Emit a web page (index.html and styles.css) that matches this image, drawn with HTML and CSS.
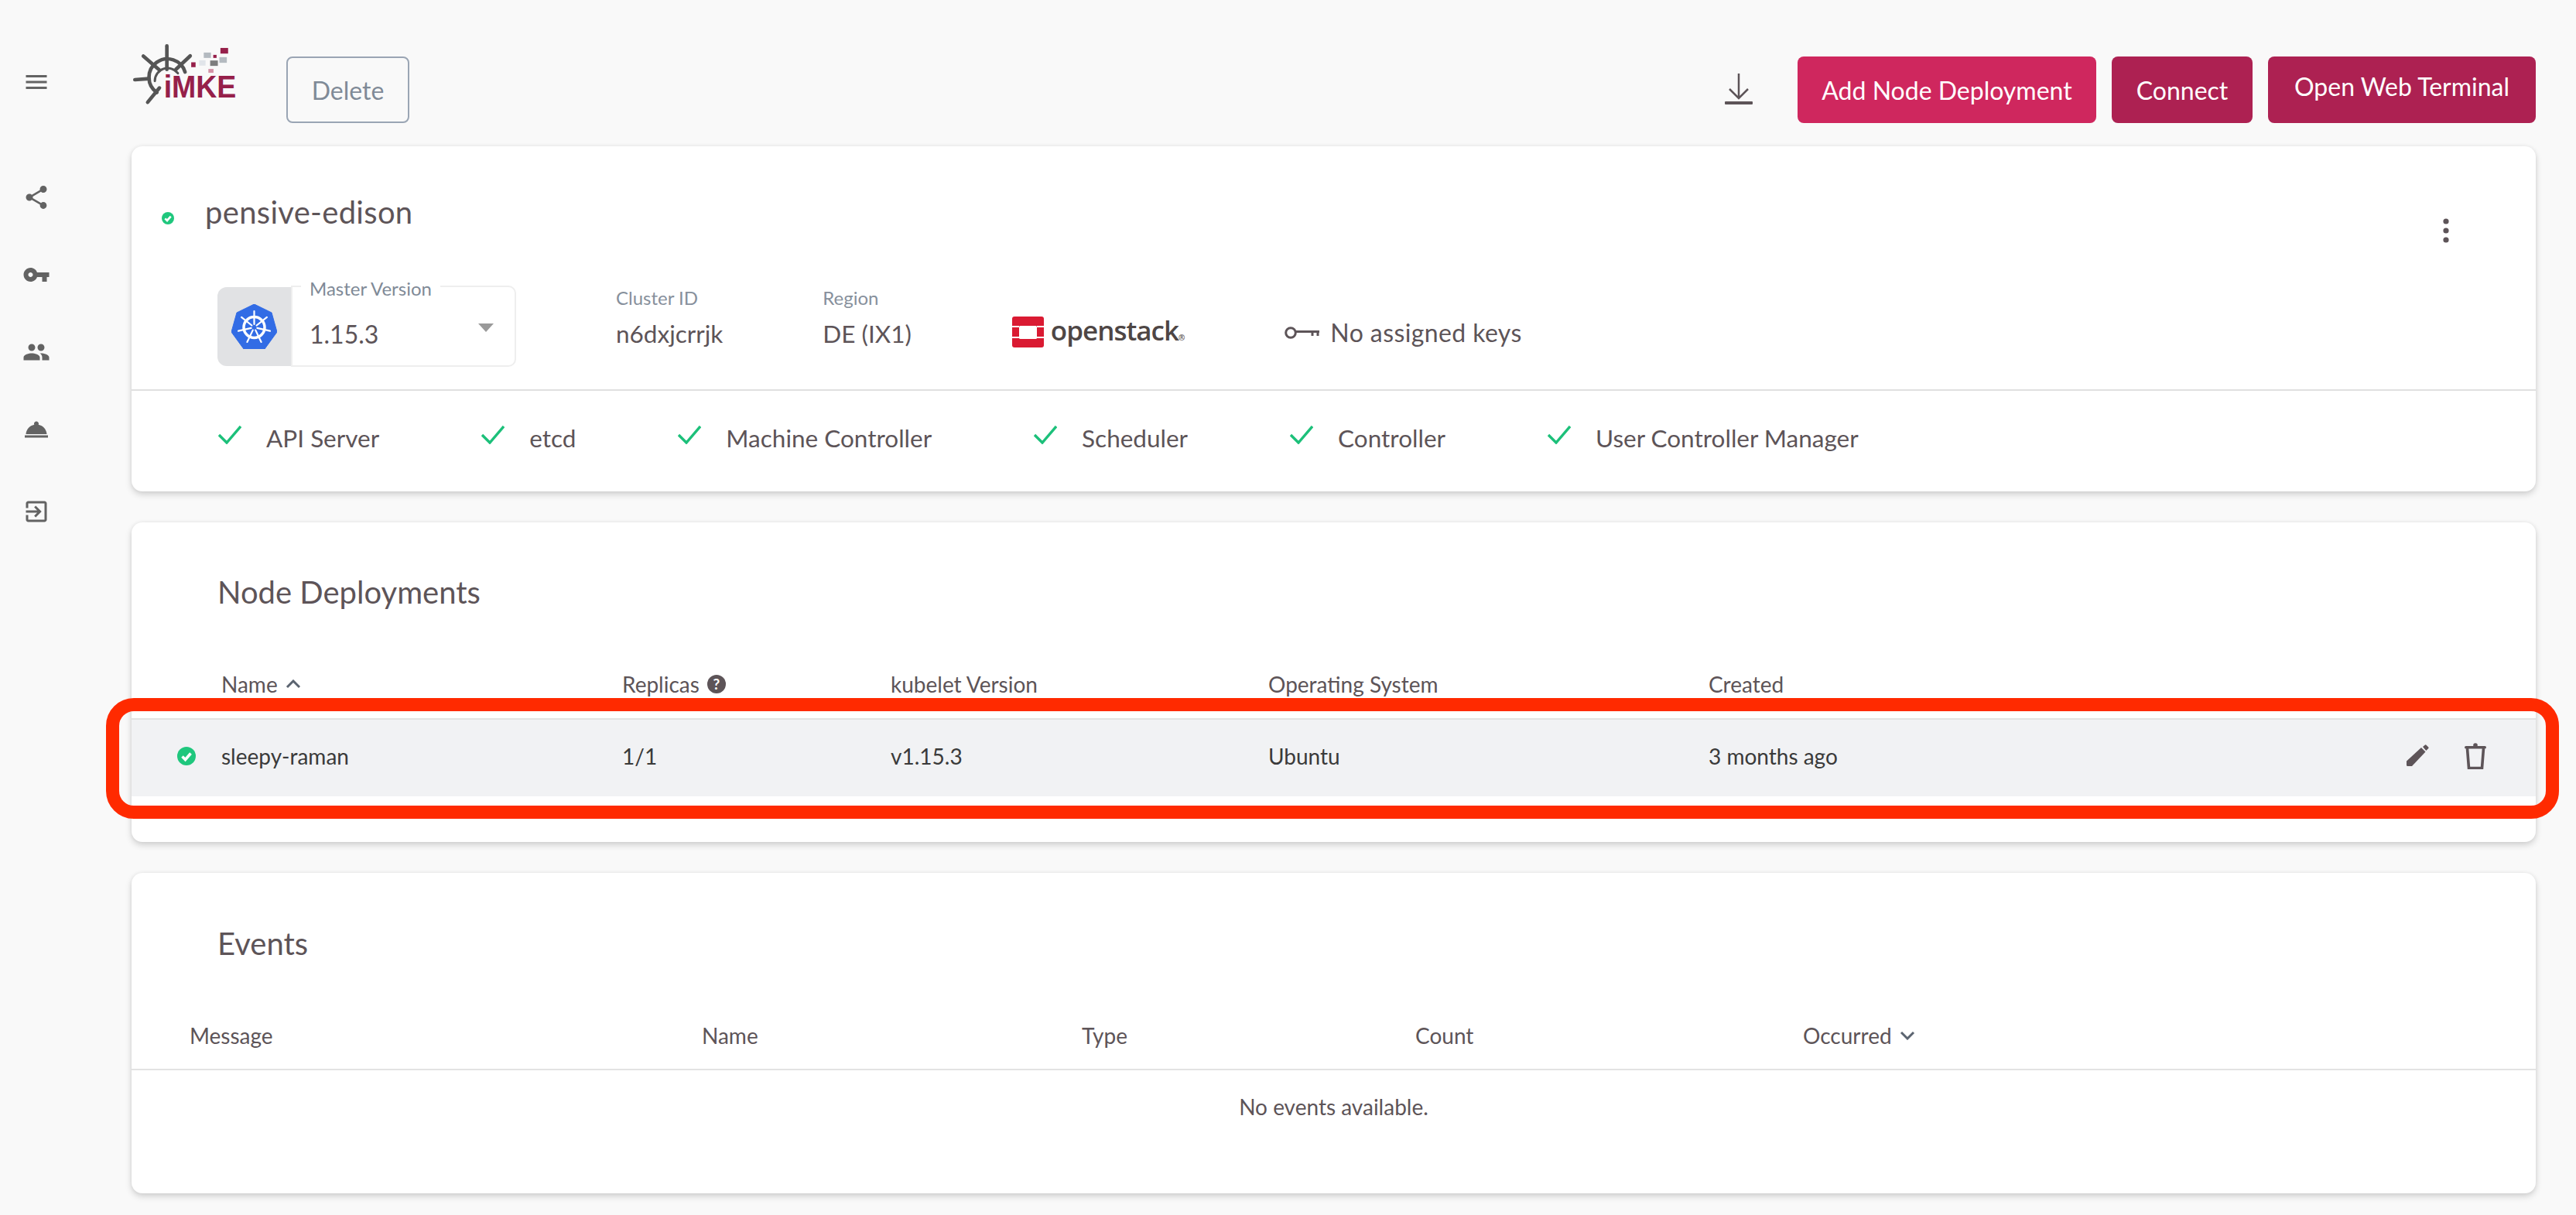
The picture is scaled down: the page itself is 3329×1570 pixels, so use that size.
FILE: index.html
```html
<!DOCTYPE html>
<html lang="en">
<head>
    <title>pensive-edison</title>
    <meta charset="UTF-8">
    <link rel="stylesheet" href="styles.css">
</head>
<body>
    <div class="shell">
        <!-- Sidebar -->
        <nav class="sidebar">
            <svg class="nav-icon nav-menu" viewBox="0 0 24 24"><path d="M3 18h18v-2H3v2zm0-5h18v-2H3v2zm0-7v2h18V6H3z"/></svg>
            <svg class="nav-icon" viewBox="0 0 24 24"><path d="M18 16.08c-.76 0-1.44.3-1.96.77L8.91 12.7c.05-.23.09-.46.09-.7s-.04-.47-.09-.7l7.05-4.11c.54.5 1.25.81 2.04.81 1.66 0 3-1.34 3-3s-1.34-3-3-3-3 1.34-3 3c0 .24.04.47.09.7L8.04 9.81C7.5 9.31 6.79 9 6 9c-1.66 0-3 1.34-3 3s1.34 3 3 3c.79 0 1.5-.31 2.04-.81l7.12 4.16c-.05.21-.08.43-.08.65 0 1.61 1.31 2.92 2.92 2.92 1.61 0 2.92-1.31 2.92-2.92s-1.31-2.92-2.92-2.92z"/></svg>
            <svg class="nav-icon" viewBox="0 0 24 24"><path d="M12.65 10C11.83 7.67 9.61 6 7 6c-3.31 0-6 2.69-6 6s2.69 6 6 6c2.61 0 4.83-1.67 5.65-4H17v4h4v-4h2v-4H12.65zM7 14c-1.1 0-2-.9-2-2s.9-2 2-2 2 .9 2 2-.9 2-2 2z"/></svg>
            <svg class="nav-icon" viewBox="0 0 24 24"><path d="M16 11c1.66 0 2.99-1.34 2.99-3S17.66 5 16 5c-1.66 0-3 1.34-3 3s1.34 3 3 3zm-8 0c1.66 0 2.99-1.34 2.99-3S9.66 5 8 5C6.34 5 5 6.34 5 8s1.34 3 3 3zm0 2c-2.33 0-7 1.17-7 3.5V19h14v-2.5c0-2.33-4.67-3.5-7-3.5zm8 0c-.29 0-.62.02-.97.05 1.16.84 1.97 1.97 1.97 3.45V19h6v-2.5c0-2.33-4.67-3.5-7-3.5z"/></svg>
            <svg class="nav-icon" viewBox="0 0 24 24"><path d="M2 17h20v2H2zm11.84-9.21c.1-.24.16-.51.16-.79 0-1.1-.9-2-2-2s-2 .9-2 2c0 .28.06.55.16.79C6.25 8.6 3.27 11.93 3 16h18c-.27-4.07-3.25-7.4-7.16-8.21z"/></svg>
            <svg class="nav-icon nav-exit" viewBox="0 0 24 24"><path d="M10.09 15.59L11.5 17l5-5-5-5-1.41 1.41L12.67 11H3v2h9.67l-2.58 2.59zM19 3H5c-1.11 0-2 .9-2 2v4h2V5h14v14H5v-4H3v4c0 1.1.89 2 2 2h14c1.1 0 2-.9 2-2V5c0-1.1-.9-2-2-2z"/></svg>
        </nav>

        <main class="content">
            <!-- Top bar -->
            <div class="topbar">
                <svg class="logo" viewBox="60 45 415 290">
                    <g fill="none" stroke="#555" stroke-width="14" stroke-linecap="round">
                        <path d="M158 240A72 72 0 1 1 268 160"/>
                        <path d="M197 58V150"/>
                        <path d="M72 190L128 186"/>
                        <path d="M105 98L168 152"/>
                        <path d="M288 97L232 150"/>
                        <path d="M122 278L168 222"/>
                        <path d="M150 195A50 50 0 0 1 240 165" stroke-width="9"/>
                    </g>
                    <rect x="406" y="66" width="30" height="22" fill="#96204a"/>
                    <rect x="341" y="84" width="28" height="21" fill="#b4bac0"/>
                    <rect x="378" y="93" width="13" height="12" fill="#96204a"/>
                    <rect x="323" y="114" width="25" height="21" fill="#e1e5ea"/>
                    <rect x="366" y="115" width="30" height="21" fill="#7d7d7d"/>
                    <rect x="402" y="102" width="29" height="22" fill="#b4bac0"/>
                    <rect x="292" y="122" width="17" height="19" fill="#96204a"/>
                    <rect x="359" y="148" width="20" height="15" fill="#d392a6"/>
                    <text x="185" y="260" class="logo-text" textLength="283" lengthAdjust="spacingAndGlyphs">iMKE</text>
                </svg>
                <button class="btn btn-delete">Delete</button>
                <svg class="download" viewBox="0 0 36 40">
                    <path d="M18 0V31M6 20L18 32L30 20" fill="none" stroke="#5d5458" stroke-width="2.5"/>
                    <rect x="0" y="36" width="36" height="4" rx="1" fill="#5d5458"/>
                </svg>
                <button class="btn btn-add">Add Node Deployment</button>
                <button class="btn btn-dark btn-connect">Connect</button>
                <button class="btn btn-dark btn-terminal">Open Web Terminal</button>
            </div>

            <!-- Cluster card -->
            <section class="card card-cluster">
                <div class="cluster-head">
                    <div class="title-row">
                        <svg class="status-small" viewBox="0 0 24 24"><circle cx="12" cy="12" r="12" fill="#1fc77d"/><path d="M6.5 12.5L10.5 16.5L17.5 8.5" fill="none" stroke="#fff" stroke-width="4"/></svg>
                        <h1 class="cluster-name">pensive-edison</h1>
                        <svg class="kebab" viewBox="0 0 8 32"><circle cx="4" cy="4" r="3.6"/><circle cx="4" cy="16" r="3.6"/><circle cx="4" cy="28" r="3.6"/></svg>
                    </div>
                    <div class="meta-row">
                        <div class="version">
                            <div class="version-logo">
                                <svg class="k8s" viewBox="0 0 59 58">
                                    <path d="M29.5 0L52 11L59 36L43 58H16L0 36L7 11Z" fill="#326ce5" stroke="#326ce5" stroke-linejoin="round"/>
                                    <g fill="none" stroke="#fff" stroke-linecap="round">
                                        <circle cx="29.5" cy="30" r="13.5" stroke-width="3.5"/>
                                        <g stroke-width="2.2">
                                            <path d="M29.5 9V26"/>
                                            <path d="M29.5 9V26" transform="rotate(51.4 29.5 30)"/>
                                            <path d="M29.5 9V26" transform="rotate(102.9 29.5 30)"/>
                                            <path d="M29.5 9V26" transform="rotate(154.3 29.5 30)"/>
                                            <path d="M29.5 9V26" transform="rotate(205.7 29.5 30)"/>
                                            <path d="M29.5 9V26" transform="rotate(257.1 29.5 30)"/>
                                            <path d="M29.5 9V26" transform="rotate(308.6 29.5 30)"/>
                                        </g>
                                    </g>
                                </svg>
                            </div>
                            <div class="version-select">
                                <span class="version-label">Master Version</span>
                                <span class="version-value">1.15.3</span>
                                <span class="caret"></span>
                            </div>
                        </div>
                        <div class="meta-item">
                            <div class="meta-label">Cluster ID</div>
                            <div class="meta-value">n6dxjcrrjk</div>
                        </div>
                        <div class="meta-item">
                            <div class="meta-label">Region</div>
                            <div class="meta-value">DE (IX1)</div>
                        </div>
                        <div class="openstack">
                            <svg class="openstack-mark" viewBox="0 0 41 40">
                                <rect width="41" height="40" rx="3" fill="#da1a32"/>
                                <rect x="9" y="12" width="23" height="17" rx="1.5" fill="#fff"/>
                                <rect x="0" y="12" width="9" height="2" fill="#fff"/>
                                <rect x="32" y="12" width="9" height="2" fill="#fff"/>
                                <rect x="0" y="26" width="9" height="2" fill="#fff"/>
                                <rect x="32" y="26" width="9" height="2" fill="#fff"/>
                            </svg>
                            <span class="openstack-name">openstack<span class="openstack-reg">®</span></span>
                        </div>
                        <div class="keys">
                            <svg class="keys-icon" viewBox="0 0 45 16">
                                <circle cx="8" cy="8" r="6.3" fill="none" stroke="#5d5458" stroke-width="3"/>
                                <path d="M14 6.5H45M36 6.5V12M43 6.5V12" fill="none" stroke="#5d5458" stroke-width="3"/>
                            </svg>
                            <span>No assigned keys</span>
                        </div>
                    </div>
                </div>
                <div class="health">
                    <div class="health-item"><svg class="check" viewBox="0 0 30 24"><path d="M1 12L11 22L29 1"/></svg>API Server</div>
                    <div class="health-item"><svg class="check" viewBox="0 0 30 24"><path d="M1 12L11 22L29 1"/></svg>etcd</div>
                    <div class="health-item"><svg class="check" viewBox="0 0 30 24"><path d="M1 12L11 22L29 1"/></svg>Machine Controller</div>
                    <div class="health-item"><svg class="check" viewBox="0 0 30 24"><path d="M1 12L11 22L29 1"/></svg>Scheduler</div>
                    <div class="health-item"><svg class="check" viewBox="0 0 30 24"><path d="M1 12L11 22L29 1"/></svg>Controller</div>
                    <div class="health-item"><svg class="check" viewBox="0 0 30 24"><path d="M1 12L11 22L29 1"/></svg>User Controller Manager</div>
                </div>
            </section>

            <!-- Node deployments -->
            <section class="card card-nodes">
                <h2 class="card-title">Node Deployments</h2>
                <div class="node-grid node-header">
                    <div></div>
                    <div class="th">Name <svg class="chevron" viewBox="0 0 20 12"><path d="M2 10L10 2L18 10"/></svg></div>
                    <div class="th">Replicas <span class="help">?</span></div>
                    <div class="th">kubelet Version</div>
                    <div class="th">Operating System</div>
                    <div class="th">Created</div>
                </div>
                <div class="node-grid node-row">
                    <svg class="status-row" viewBox="0 0 24 24"><circle cx="12" cy="12" r="12" fill="#1fc77d"/><path d="M6.5 12.5L10.5 16.5L17.5 8.5" fill="none" stroke="#fff" stroke-width="3.6"/></svg>
                    <div>sleepy-raman</div>
                    <div>1/1</div>
                    <div>v1.15.3</div>
                    <div>Ubuntu</div>
                    <div class="row-last">
                        <span>3 months ago</span>
                        <span class="row-actions">
                            <svg class="edit" viewBox="0 0 29 29"><path d="M0 21.5L19 4L24.5 9.5L7 28H1.5Q0 28 0 26.5Z"/><path d="M21 3L24 0.5Q24.7 0 25.5 0.7L28.3 3.5Q29 4.3 28.3 5L25.3 8Z"/></svg>
                            <svg class="trash" viewBox="0 0 28 34">
                                <path d="M3.5 7L5.5 32.5H22.5L24.5 7" fill="none" stroke="#5d5458" stroke-width="3.6"/>
                                <rect x="0" y="4" width="28" height="3.6" rx="1.8" fill="#5d5458"/>
                                <circle cx="14" cy="3" r="2.8" fill="#5d5458"/>
                            </svg>
                        </span>
                    </div>
                </div>
                <!-- red annotation round the row -->
                <div class="highlight"></div>
            </section>

            <!-- Events -->
            <section class="card card-events">
                <h2 class="card-title">Events</h2>
                <div class="event-grid">
                    <div class="th">Message</div>
                    <div class="th">Name</div>
                    <div class="th">Type</div>
                    <div class="th">Count</div>
                    <div class="th">Occurred <svg class="chevron" viewBox="0 0 20 12"><path d="M2 2L10 10L18 2"/></svg></div>
                </div>
                <div class="empty">No events available.</div>
            </section>
        </main>
    </div>
</body>
</html>
```

FILE: styles.css
```css
html, body {
    margin: 0;
    height: 100%;
    background-color: #f9f9f9;
    font-family: Lato, "Open Sans", sans-serif;
    font-weight: 400;
    color: #5d5458;
    overflow: hidden;
}
.shell {
    display: flex;
}
/* Sidebar */
.sidebar {
    width: 170px;
    flex: none;
    display: flex;
    flex-direction: column;
    align-items: flex-start;
    padding: 88px 0 0 29px;
    box-sizing: border-box;
    gap: 64px;
}
.nav-icon {
    width: 36px;
    height: 36px;
    fill: #636363;
}
.nav-menu {
    margin-bottom: 49px;
}
.nav-exit {
    margin-top: 6px;
}
/* Top bar */
.content {
    flex: 1;
    min-width: 0;
    padding: 73px 52px 0 0;
}
.topbar {
    display: flex;
    align-items: flex-start;
    height: 86px;
    margin-bottom: 30px;
}
.logo {
    width: 138px;
    height: 96px;
    margin: -18px 62px 0 0;
    overflow: visible;
}
.logo-text {
    font-family: "Liberation Sans", sans-serif;
    font-size: 125px;
    font-weight: 700;
    fill: #96204a;
}
.btn {
    height: 86px;
    border: none;
    border-radius: 8px;
    font-family: inherit;
    font-size: 32px;
    font-weight: 400;
    color: #fff;
    padding: 0;
}
.btn-delete {
    width: 159px;
    background: transparent;
    border: 2px solid #9aa5b4;
    color: #7f8a97;
}
.download {
    width: 36px;
    height: 40px;
    margin: 22px 58px 0 auto;
}
.btn-add {
    width: 386px;
    background-color: #cf275e;
    margin-right: 20px;
}
.btn-dark {
    background-color: #ad2152;
}
.btn-connect {
    width: 182px;
    margin-right: 20px;
}
.btn-terminal {
    width: 346px;
    padding-bottom: 10px;
}
/* Cards */
.card {
    position: relative;
    background-color: #fff;
    border-radius: 14px;
    box-shadow: 0 4px 8px rgba(0, 0, 0, 0.16), 0 0 5px rgba(0, 0, 0, 0.06);
    margin-bottom: 40px;
}
.cluster-head {
    padding: 59px 0 29px;
    border-bottom: 2px solid #e0e0e0;
}
.title-row {
    display: flex;
    align-items: center;
    height: 52px;
    padding-left: 39px;
}
.status-small {
    width: 16px;
    height: 16px;
    margin: 15px 40px 0 0;
}
.cluster-name {
    margin: 0;
    font-size: 40px;
    font-weight: 400;
    line-height: 52px;
    letter-spacing: 0.3px;
}
.kebab {
    width: 8px;
    height: 32px;
    margin: 48px 112px 0 auto;
    fill: #5d5458;
}
.meta-row {
    display: flex;
    align-items: flex-start;
    gap: 129px;
    margin-top: 69px;
    padding-left: 111px;
}
.version {
    display: flex;
    width: 386px;
    height: 105px;
}
.version-logo {
    width: 95px;
    height: 102px;
    margin-top: 2px;
    display: flex;
    align-items: center;
    justify-content: center;
    background-color: #e1e2e4;
    border-radius: 12px 0 0 12px;
}
.k8s {
    width: 59px;
    height: 58px;
}
.version-select {
    position: relative;
    flex: 1;
    border: 2px solid #eeeeee;
    border-radius: 0 10px 10px 0;
    padding: 38px 0 0 22px;
    font-size: 32px;
    line-height: 46px;
}
.version-label {
    position: absolute;
    top: -13px;
    left: 11px;
    padding: 0 11px;
    background-color: #fff;
    font-size: 24px;
    line-height: 30px;
    color: #7f8a97;
}
.caret {
    position: absolute;
    top: 47px;
    right: 27px;
    border-top: 11px solid #9a9a9a;
    border-left: 10px solid transparent;
    border-right: 10px solid transparent;
}
.meta-label {
    padding-top: 1px;
    font-size: 24px;
    line-height: 30px;
    color: #87909c;
}
.meta-value {
    margin-top: 11px;
    font-size: 31.5px;
    line-height: 40px;
}
.openstack {
    display: flex;
    align-items: flex-start;
    gap: 9px;
    margin-top: 40px;
    margin-left: 1px;
}
.openstack-mark {
    width: 41px;
    height: 40px;
}
.openstack-name {
    font-family: "Open Sans", sans-serif;
    font-size: 35px;
    font-weight: 600;
    line-height: 36px;
    letter-spacing: -1px;
    color: #4e4645;
}
.openstack-reg {
    font-size: 10px;
    letter-spacing: 0;
}
.keys {
    display: flex;
    align-items: center;
    gap: 14px;
    margin-top: 41px;
    font-size: 32px;
    line-height: 40px;
    letter-spacing: 0.4px;
}
.keys-icon {
    width: 45px;
    height: 16px;
}
.health {
    display: flex;
    gap: 132px;
    align-items: center;
    height: 130px;
    padding: 0 0 8px 112px;
    box-sizing: border-box;
    font-size: 31.5px;
}
.health-item {
    display: flex;
    align-items: center;
    gap: 32px;
}
.check {
    width: 30px;
    height: 24px;
    margin-top: -8px;
    fill: none;
    stroke: #1cc07a;
    stroke-width: 3.4;
}
.card-title {
    margin: 0;
    padding-left: 111px;
    font-size: 40px;
    font-weight: 400;
    line-height: 52px;
}
.card-nodes {
    padding: 64px 0 59px;
}
.card-events {
    padding: 65px 0 65px;
}
.th {
    font-size: 28px;
    display: flex;
    align-items: center;
    gap: 10px;
    white-space: nowrap;
}
.node-grid {
    display: grid;
    grid-template-columns: 116px 518px 347px 488px 569px 1fr;
    align-items: center;
}
.node-header {
    height: 84px;
    padding-bottom: 2px;
    margin-top: 51px;
    border-bottom: 2px solid #e3e3e3;
}
.node-row {
    height: 99px;
    padding-bottom: 6px;
    box-sizing: border-box;
    background-color: #f1f2f4;
    font-size: 28px;
    color: #3a3a3a;
}
.status-row {
    width: 24px;
    height: 24px;
    margin-left: 59px;
}
.chevron {
    width: 20px;
    height: 12px;
    fill: none;
    stroke: #5b6470;
    stroke-width: 3;
}
.help {
    width: 24px;
    height: 24px;
    border-radius: 50%;
    background-color: #5d5458;
    color: #fff;
    font-size: 19px;
    font-weight: 700;
    line-height: 24px;
    text-align: center;
}
.row-last {
    display: flex;
    align-items: center;
    justify-content: space-between;
    padding-right: 64px;
}
.row-actions {
    display: flex;
    align-items: center;
    gap: 46px;
}
.edit {
    width: 29px;
    height: 29px;
    fill: #5d5458;
}
.trash {
    width: 28px;
    height: 34px;
}
.highlight {
    position: absolute;
    left: -33px;
    top: 227px;
    right: -30px;
    height: 156px;
    box-sizing: border-box;
    border: 17px solid #ff2a00;
    border-radius: 36px;
    pointer-events: none;
}
.event-grid {
    display: grid;
    grid-template-columns: 662px 491px 431px 501px 1fr;
    align-items: center;
    height: 82px;
    padding: 0 0 2px 75px;
    margin-top: 52px;
    border-bottom: 2px solid #e3e3e3;
}
.empty {
    height: 94px;
    line-height: 94px;
    text-align: center;
    font-size: 28px;
}
```
